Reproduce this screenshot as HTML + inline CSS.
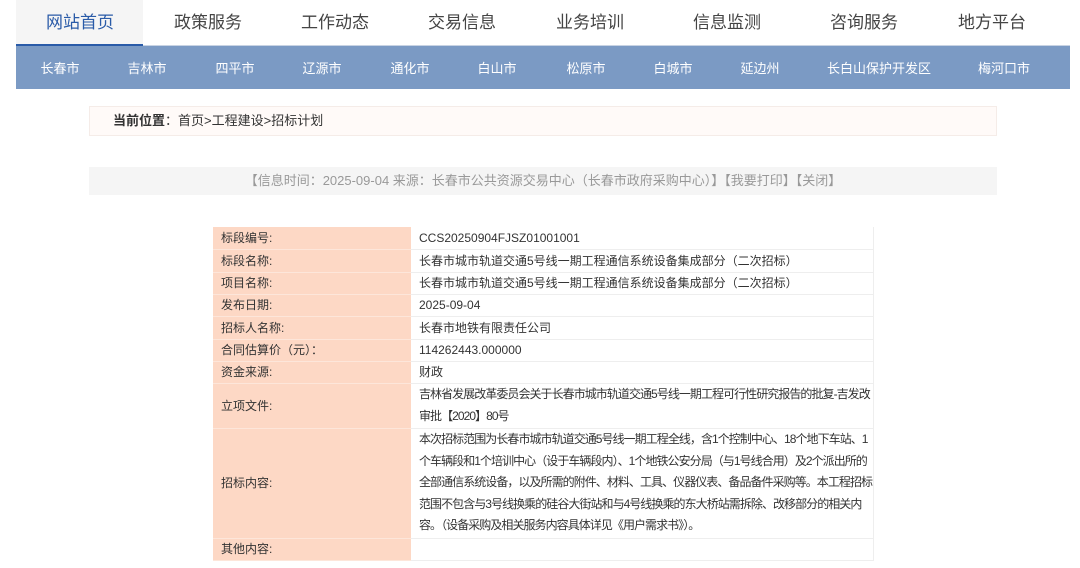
<!DOCTYPE html>
<html><head><meta charset="utf-8"><style>
*{margin:0;padding:0;box-sizing:border-box}
body{width:1080px;height:568px;overflow:hidden;background:#fff;font-family:"Liberation Sans","Noto Sans CJK SC",sans-serif;color:#333;position:relative}
.a{position:absolute;white-space:nowrap;transform:translateX(-50%)}
.top{position:absolute;left:16px;top:0;width:1054px;height:46px;border-bottom:1px solid #c8d3e3}
.home{position:absolute;left:16px;top:0;width:127px;height:46px;background:#f5f5f5;border-bottom:2px solid #2a5ba8}
.t{top:8px;font-size:17px;color:#444}
.sub{position:absolute;left:16px;top:46px;width:1054px;height:43px;background:#7b9ac4}
.s{top:58px;font-size:13px;color:#fff}
.bc{position:absolute;left:89px;top:106px;width:908px;height:30px;background:#fffaf8;border:1px solid #f5ece8;font-size:13px;line-height:28px;padding-left:23px}
.info{position:absolute;left:89px;top:167px;width:908px;height:28px;background:#f5f5f5;font-size:13px;color:#999;line-height:28px;text-align:center}
table{position:absolute;left:213px;top:227px;width:660px;border-collapse:collapse;font-size:12px;table-layout:fixed}
td{border-bottom:1px solid #eee;height:22px;line-height:20px;vertical-align:middle;white-space:nowrap;padding:0;overflow:visible}
tr.b td{height:23px}
td.l{background:#fdd8c5;padding-left:8px;border-bottom:1px solid #fde6da}
td.v{padding-left:8px;border-right:1px solid #eee}
td.n{letter-spacing:-0.95px;line-height:21.6px}
</style></head><body>
<div class="top"></div><div class="home"></div>
<div class="a t" style="left:80px;color:#2a5ba8">网站首页</div>
<div class="a t" style="left:208px">政策服务</div>
<div class="a t" style="left:335px">工作动态</div>
<div class="a t" style="left:462px">交易信息</div>
<div class="a t" style="left:590px">业务培训</div>
<div class="a t" style="left:727px">信息监测</div>
<div class="a t" style="left:864px">咨询服务</div>
<div class="a t" style="left:992px">地方平台</div>
<div class="sub"></div>
<div class="a s" style="left:60px">长春市</div>
<div class="a s" style="left:147px">吉林市</div>
<div class="a s" style="left:235px">四平市</div>
<div class="a s" style="left:322px">辽源市</div>
<div class="a s" style="left:410px">通化市</div>
<div class="a s" style="left:497px">白山市</div>
<div class="a s" style="left:586px">松原市</div>
<div class="a s" style="left:673px">白城市</div>
<div class="a s" style="left:760px">延边州</div>
<div class="a s" style="left:879px">长白山保护开发区</div>
<div class="a s" style="left:1004px">梅河口市</div>
<div class="bc"><b>当前位置</b>：首页&gt;工程建设&gt;招标计划</div>
<div class="info">【信息时间：2025-09-04 来源：长春市公共资源交易中心（长春市政府采购中心）】【我要打印】【关闭】</div>
<table>
<colgroup><col style="width:198px"><col style="width:462px"></colgroup>
<tr><td class="l">标段编号:</td><td class="v">CCS20250904FJSZ01001001</td></tr>
<tr class="b"><td class="l">标段名称:</td><td class="v">长春市城市轨道交通5号线一期工程通信系统设备集成部分（二次招标）</td></tr>
<tr><td class="l">项目名称:</td><td class="v">长春市城市轨道交通5号线一期工程通信系统设备集成部分（二次招标）</td></tr>
<tr><td class="l">发布日期:</td><td class="v">2025-09-04</td></tr>
<tr class="b"><td class="l">招标人名称:</td><td class="v">长春市地铁有限责任公司</td></tr>
<tr><td class="l">合同估算价（元）：</td><td class="v">114262443.000000</td></tr>
<tr><td class="l">资金来源:</td><td class="v">财政</td></tr>
<tr><td class="l" style="height:45px">立项文件:</td><td class="v n">吉林省发展改革委员会关于长春市城市轨道交通5号线一期工程可行性研究报告的批复-吉发改<br>审批【2020】80号</td></tr>
<tr><td class="l" style="height:110px">招标内容:</td><td class="v n">本次招标范围为长春市城市轨道交通5号线一期工程全线，含1个控制中心、18个地下车站、1<br>个车辆段和1个培训中心（设于车辆段内）、1个地铁公安分局（与1号线合用）及2个派出所的<br>全部通信系统设备，以及所需的附件、材料、工具、仪器仪表、备品备件采购等。本工程招标<br>范围不包含与3号线换乘的硅谷大街站和与4号线换乘的东大桥站需拆除、改移部分的相关内<br>容。（设备采购及相关服务内容具体详见《用户需求书》）。</td></tr>
<tr><td class="l">其他内容:</td><td class="v"></td></tr>
</table>
</body></html>
